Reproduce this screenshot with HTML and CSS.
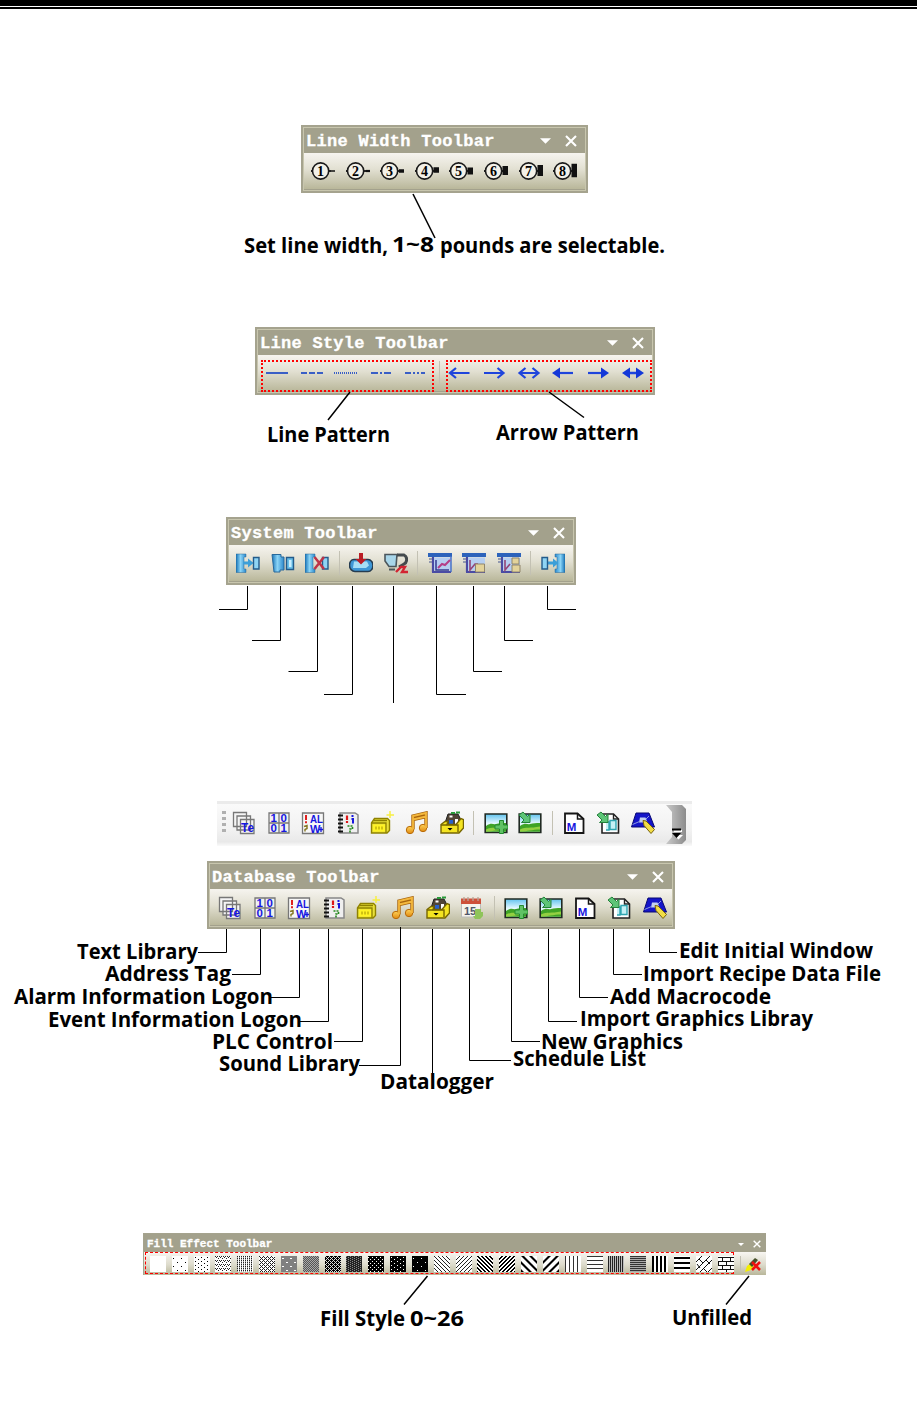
FILE: index.html
```html
<!DOCTYPE html>
<html lang="en">
<head>
<meta charset="utf-8">
<title>Toolbars</title>
<link rel="stylesheet" href="styles.css">
</head>
<body>
<svg class="defs" width="0" height="0">
  <defs>
    <linearGradient id="blue" x1="0" x2="1"><stop offset="0" stop-color="#1673b8"/><stop offset=".45" stop-color="#8bd4f6"/><stop offset="1" stop-color="#2a88cc"/></linearGradient>
    <linearGradient id="sky" x1="0" y1="0" x2="0" y2="1"><stop offset="0" stop-color="#5fc2ee"/><stop offset=".5" stop-color="#e4f8ff"/></linearGradient>
    <linearGradient id="gold" x1="0" y1="0" x2="0" y2="1"><stop offset="0" stop-color="#ffd35a"/><stop offset="1" stop-color="#e08a10"/></linearGradient>
    <linearGradient id="cap"><stop offset="0" stop-color="#c9c9c9"/><stop offset="1" stop-color="#8c8c8c"/></linearGradient>
    <pattern id="p1" width="8" height="8" patternUnits="userSpaceOnUse"><path fill="#fff" d="M0 0h8v8H0z"/><path d="M1 2h1v1H1zM5 6h1v1H5z"/></pattern>
    <pattern id="p2" width="6" height="4" patternUnits="userSpaceOnUse"><path fill="#fff" d="M0 0h6v4H0z"/><path d="M1 1h1v1H1zM4 3h1v1H4z"/></pattern>
    <pattern id="p3" width="4" height="4" patternUnits="userSpaceOnUse"><path fill="#fff" d="M0 0h4v4H0z"/><path fill="#222" d="M0 0h1v1H0zM2 0h1v1H2zM1 1h1v1H1zM3 2h1v1H3z"/></pattern>
    <pattern id="p4" width="2" height="2" patternUnits="userSpaceOnUse"><path fill="#fff" d="M0 0h2v2H0z"/><path fill="#222" d="M0 0h1v1H0z"/><path fill="#aaa" d="M0 1h1v1H0z"/></pattern>
    <pattern id="p5" width="4" height="4" patternUnits="userSpaceOnUse"><path fill="#fff" d="M0 0h4v4H0z"/><path fill="#222" d="M0 0h1v1H0zM1 1h1v1H1zM2 2h1v1H2zM3 3h1v1H3zM3 1h1v1H3zM1 3h1v1H1z"/></pattern>
    <pattern id="p6" width="8" height="8" patternUnits="userSpaceOnUse"><path fill="#808080" d="M0 0h8v8H0z"/><path fill="#fff" d="M1 2h2v1H1zM5 6h2v1H5z"/></pattern>
    <pattern id="p7" width="2" height="2" patternUnits="userSpaceOnUse"><path fill="#aaa" d="M0 0h2v2H0z"/><path fill="#555" d="M0 0h1v1H0zM1 1h1v1H1z"/></pattern>
    <pattern id="p8" width="4" height="4" patternUnits="userSpaceOnUse"><path d="M0 0h4v4H0z"/><path fill="#ddd" d="M0 0h1v1H0zM1 1h1v1H1zM2 2h1v1H2zM3 3h1v1H3zM3 1h1v1H3zM1 3h1v1H1z"/></pattern>
    <pattern id="p9" width="4" height="2" patternUnits="userSpaceOnUse"><path fill="#222" d="M0 0h4v2H0z"/><path fill="#888" d="M0 0h1v1H0zM2 1h1v1H2z"/></pattern>
    <pattern id="p10" width="4" height="4" patternUnits="userSpaceOnUse"><path d="M0 0h4v4H0z"/><path fill="#fff" d="M0 1h1v1H0zM2 3h1v1H2z"/></pattern>
    <pattern id="p11" width="6" height="4" patternUnits="userSpaceOnUse"><path d="M0 0h6v4H0z"/><path fill="#fff" d="M1 1h1v1H1zM4 3h1v1H4z"/></pattern>
    <pattern id="p12" width="8" height="8" patternUnits="userSpaceOnUse"><path d="M0 0h8v8H0z"/><path fill="#fff" d="M1 2h1v1H1zM5 6h1v1H5z"/></pattern>
    <pattern id="p13" width="4" height="4" patternUnits="userSpaceOnUse"><path fill="#fff" d="M0 0h4v4H0z"/><path fill="#222" d="M0 0h1v1H0zM1 1h1v1H1zM2 2h1v1H2zM3 3h1v1H3z"/></pattern>
    <pattern id="p15" width="4" height="4" patternUnits="userSpaceOnUse"><path fill="#fff" d="M0 0h4v4H0z"/><path d="M0 0h2v1H0zM1 1h2v1H1zM2 2h2v1H2zM3 3h1v1H3zM0 3h1v1H0z"/></pattern>
    <pattern id="p17" width="8" height="8" patternUnits="userSpaceOnUse"><path fill="#fff" d="M0 0h8v8H0z"/><path d="M0 0h3l5 5v3zM0 5v3h3z"/></pattern>
    <pattern id="p19" width="4" height="4" patternUnits="userSpaceOnUse"><path fill="#fff" d="M0 0h4v4H0z"/><path fill="#333" d="M0 0h1v4H0z"/></pattern>
    <pattern id="p20" width="4" height="4" patternUnits="userSpaceOnUse"><path fill="#fff" d="M0 0h4v4H0z"/><path fill="#333" d="M0 0h4v1H0z"/></pattern>
    <pattern id="p21" width="2" height="2" patternUnits="userSpaceOnUse"><path fill="#bbb" d="M0 0h2v2H0z"/><path fill="#222" d="M0 0h1v2H0z"/></pattern>
    <pattern id="p22" width="2" height="2" patternUnits="userSpaceOnUse"><path fill="#aaa" d="M0 0h2v2H0z"/><path fill="#333" d="M0 0h2v1H0z"/></pattern>
    <pattern id="p23" width="4" height="4" patternUnits="userSpaceOnUse"><path fill="#fff" d="M0 0h4v4H0z"/><path d="M0 0h2v4H0z"/></pattern>
    <pattern id="p24" width="5" height="5" patternUnits="userSpaceOnUse"><path fill="#fff" d="M0 0h5v5H0z"/><path d="M0 1h5v2H0z"/></pattern>
  </defs>
  <symbol id="down" viewBox="0 0 12 6"><path d="M0 0h12L6 6z" fill="#fff"/></symbol>
  <symbol id="close" viewBox="0 0 12 12"><path d="M1 1l10 10M11 1L1 11" stroke="#fff" stroke-width="2.100"/></symbol>
  <symbol id="ring" viewBox="0 0 24 24"><path d="M17.500 12h2.500M0 12h2" stroke="#222" stroke-width="2"/><circle cx="9.600" cy="12" r="8.100" fill="#f3f1e8" stroke="#1a1a1a" stroke-width="1.600"/></symbol>
  <symbol id="al" viewBox="0 0 24 24"><path d="M2 12h19.500M8 7L2 12l6 5" fill="none" stroke="#1f45dc" stroke-width="2.200"/></symbol>
  <symbol id="ar" viewBox="0 0 24 24"><path d="M2 12h19.500M15.500 7l6 5-6 5" fill="none" stroke="#1f45dc" stroke-width="2.200"/></symbol>
  <symbol id="ab" viewBox="0 0 24 24"><path d="M3 12h18M8.500 7L2.500 12l6 5M15.500 7l6 5-6 5" fill="none" stroke="#1f45dc" stroke-width="2.200"/></symbol>
  <symbol id="fl" viewBox="0 0 24 24"><path d="M7 12h15" stroke="#1f45dc" stroke-width="2.200"/><path d="M1 12l8-5.500v11z" fill="#1438d8"/></symbol>
  <symbol id="fr" viewBox="0 0 24 24"><path d="M2 12h15" stroke="#1f45dc" stroke-width="2.200"/><path d="M23 12l-8-5.500v11z" fill="#1438d8"/></symbol>
  <symbol id="fb" viewBox="0 0 24 24"><path d="M5 12h15" stroke="#1f45dc" stroke-width="2.500"/><path d="M1 12l8-5.500v11zM23 12l-8-5.500v11z" fill="#1438d8"/></symbol>
  <symbol id="bracket" viewBox="0 0 24 24"><path d="M0 3h10v3H8v12h2v3.500H0z" fill="url(#blue)" stroke="#28699b" stroke-width=".5"/></symbol>
  <symbol id="s1" viewBox="0 0 24 24"><use href="#bracket"/><path d="M7 10.500h5V7.500l5.500 4.500-5.500 4.500v-3H7z" fill="#3c9fd8"/><path d="M17.500 6.500h5.500v11.500h-5.500z" fill="#8fd4f4" stroke="#235b8b" stroke-width="1.400"/></symbol>
  <symbol id="s2" viewBox="0 0 24 24"><path d="M1 3.500h9v2.500h3v13H9v2H3z" fill="url(#blue)" stroke="#28699b"/><path d="M15.500 6.500h7v12h-7z" fill="#69bfe9" stroke="#235b8b" stroke-width="1.400"/><path d="M18 9h2.500v7H18z" fill="#c9efff"/></symbol>
  <symbol id="s3" viewBox="0 0 24 24"><use href="#bracket"/><path d="M17.500 6.500h5.500v11.500h-5.500z" fill="#8fd4f4" stroke="#235b8b" stroke-width="1.400"/><path d="M9.500 6l9.500 12M19 6L9.500 18" stroke="#bd3347" stroke-width="2.500"/></symbol>
  <symbol id="s4" viewBox="0 0 24 24"><path d="M5 8.500h14c3 0 5 3 5 6s-2 6-5 6H6c-3 0-5.500-3-5.500-6s1.500-6 4.500-6z" fill="#3f97d6" stroke="#253c50" stroke-width="1.600"/><path d="M5 10.500h13l2 4-3 2.500H4z" fill="#a6def6"/><path d="M10 2h4v6h3.500L12 13.500 6.500 8H10z" fill="#ba1d25"/></symbol>
  <symbol id="s5" viewBox="0 0 24 24"><path d="M1 3.500h12l-1 12H5L1 10z" fill="#a8d6ea" stroke="#4b565c" stroke-width="1.600"/><path d="M13 4h7c4 2 3 8 0 9l-5 3" fill="none" stroke="#454b4e" stroke-width="3"/><path d="M5 18.500h6" stroke="#4b565c" stroke-width="2"/><path d="M12 21l5-5h4l-3 5h6" fill="none" stroke="#d32432" stroke-width="2.400"/></symbol>
  <symbol id="win" viewBox="0 0 24 24"><path d="M0 2h24v4H0z" fill="#2d63bb"/><path d="M5 6v15M4 21h19" stroke="#4a4ba4" stroke-width="2.200"/><path d="M6 6.500h17v13H6z" fill="#b6cff2"/><path d="M1 8h3M1 11h3" stroke="#7883a4" stroke-width="1.500"/></symbol>
  <symbol id="s6" viewBox="0 0 24 24"><use href="#win"/><path d="M23 5v16" stroke="#4972c7" stroke-width="1.500"/><path d="M8 9v10h13" fill="none" stroke="#343b91" stroke-width="1.500"/><path d="M10 17l4-4 3 1 5-5" fill="none" stroke="#b43e88" stroke-width="2"/></symbol>
  <symbol id="s7" viewBox="0 0 24 24"><use href="#win"/><path d="M8 9v10l5-6h3" fill="none" stroke="#944577" stroke-width="1.600"/><path d="M13.500 13h9v8h-9z" fill="#e3d39a" stroke="#91866c"/></symbol>
  <symbol id="s8" viewBox="0 0 24 24"><use href="#win"/><path d="M8 9v10l5-6" fill="none" stroke="#944577" stroke-width="1.600"/><path d="M15 7h7v6h-7zM15 14h8v7h-8z" fill="#e3d39a" stroke="#91866c"/></symbol>
  <symbol id="d1" viewBox="0 0 24 24"><g fill="#f5f5f5" stroke="#777" stroke-width="1.300"><path d="M1.500 1.500h13v14h-13zM5 5h13.500v14H5zM8.500 8.500H22v14H8.500z"/></g><text class="ink" x="9" y="20.500" font-size="13" textLength="13" lengthAdjust="spacingAndGlyphs">Te</text></symbol>
  <symbol id="d2" viewBox="0 0 24 24"><path d="M2 2h20v20H2zM12 2v20M2 12h20" fill="#f1f1f1" stroke="#777" stroke-width="1.300"/><g class="ink" font-size="11.500"><text x="3.600" y="11">1</text><text x="13.600" y="11">0</text><text x="3.600" y="21">0</text><text x="13.600" y="21">1</text></g></symbol>
  <symbol id="d3" viewBox="0 0 24 24"><path d="M1.500 2h21v20.500h-21z" fill="#f7f7f7" stroke="#777" stroke-width="1.300"/><path d="M5 4v5M5 10.200v2" stroke="#e02020" stroke-width="2"/><path d="M3 15.500l3-1v3l-2 1v2" fill="none" stroke="#887b28" stroke-width="1.500"/><g class="ink" font-size="11"><text x="9" y="12" textLength="13" lengthAdjust="spacingAndGlyphs">AL</text><text x="9" y="21.500">W</text></g><path d="M20 16v5M18 18.500h4" stroke="#1616e0" stroke-width="1.300"/></symbol>
  <symbol id="d4" viewBox="0 0 24 24"><path d="M4 2h15l3 2v18H4z" fill="#efefef" stroke="#888" stroke-width="1.500"/><path d="M2 4.500h5M2 8.500h5M2 12.500h5M2 16.500h5M2 20.500h5" stroke="#111" stroke-width="1.800"/><path d="M11 4.500v4.500M11 10v2" stroke="#dd1717" stroke-width="2.200"/><path d="M16.500 4v2M15.500 8h1.500v4.500" fill="none" stroke="#1717dd" stroke-width="2"/><path d="M11.500 15h5v3h-2.500v4" fill="none" stroke="#26891f" stroke-width="1.600" stroke-dasharray="2 1"/></symbol>
  <symbol id="d5" viewBox="0 0 24 24"><path d="M1.500 12l3-4.500h13l2 2v10L17 22H1.500z" fill="#e9e03a" stroke="#8f8200" stroke-width="1.400"/><path d="M2 12h14v10M4 9.500h13" fill="none" stroke="#8f8200" stroke-width="1.300"/><path d="M3 13.500h12v7H3z" fill="#fff325"/><path d="M6 15.500v3M9 15.500v3M12 15.500v3" stroke="#a29200"/><path d="M20 0v7M16.500 4h7.500" stroke="#f7ef42" stroke-width="1.500"/></symbol>
  <symbol id="d6" viewBox="0 0 24 24"><path d="M8 18.500V5L21 2v15M8 8.500L21 5.500" fill="none" stroke="#a8640c" stroke-width="3.400"/><circle cx="5" cy="19" r="3.700" fill="url(#gold)" stroke="#b86a08"/><circle cx="18" cy="17" r="3.700" fill="url(#gold)" stroke="#b86a08"/><path d="M8 18.500V5L21 2v15M8 8.500L21 5.500" fill="none" stroke="#f4b83d" stroke-width="1.800"/></symbol>
  <symbol id="d7" viewBox="0 0 24 24"><path d="M5 12l3-9h10l2 4 2 5-3 4H6z" fill="#514536" stroke="#222"/><path d="M9.500 4.500h3v2h-3zM15 8h3v5h-3z" fill="#fff"/><path d="M9 9h4v5H9z" fill="#2862cd"/><path d="M11 2h4M16 1.500h4" stroke="#299a39" stroke-width="2"/><path d="M1 13.500l4-3h3l-1 3h9l5-6 2.500 1V17L19 22H1z" fill="#f4e422" stroke="#766600" stroke-width="1.400"/><path d="M1 14h17v7" fill="none" stroke="#766600" stroke-width="1.400"/><path d="M7.500 17h5L10 19.500z"/></symbol>
  <symbol id="cal" viewBox="0 0 24 24"><path d="M1.500 4h19v17h-19z" fill="#f5f3ed" stroke="#bbb"/><path d="M1 2.500h20V8H1z" fill="#cd503a"/><path d="M4 1v4M8 1v4M13 1v4M18 1v4" stroke="#b9a697" stroke-width="1.300"/><text x="4" y="18.500" font-family="Liberation Sans" font-weight="bold" font-size="11" fill="#50576a">15</text><path d="M15 13h6v3h2v4l-3 3h-5l-2-3h2z" fill="#8fc45a"/></symbol>
  <symbol id="pic" viewBox="0 0 24 24"><path d="M1.200 3h21.600v18.500H1.200z" fill="url(#sky)" stroke="#202a23" stroke-width="1.600"/><path d="M2 15c6-4 7-1 10-2s6-1 10-1v8.700H2z" fill="#3fa326"/><path d="M2 18.500c6-3 10-1 20-3v3c-8 0-12 2-20 2z" fill="#93cf42"/></symbol>
  <symbol id="g1" viewBox="0 0 24 24"><use href="#pic"/><path d="M15.500 9.500h4V14H24v4h-4.500v4.500h-4V18H11v-4h4.500z" fill="#60c265" stroke="#248b30"/></symbol>
  <symbol id="arr" viewBox="0 0 24 24"><path d="M1 4l5 5-2.500 2.500H12V3L9.500 5.500 5 1z" fill="#5dc477" stroke="#23813a"/></symbol>
  <symbol id="g2" viewBox="0 0 24 24"><use href="#pic"/><use href="#arr"/></symbol>
  <symbol id="g3" viewBox="0 0 24 24"><path d="M3 2.500h12.500L21.500 8v14H3z" fill="#fff" stroke="#151515" stroke-width="1.800"/><path d="M15.500 2.500V8h6" fill="none" stroke="#151515" stroke-width="1.500"/><text class="ink" x="4.800" y="19.500" font-size="11.500">M</text></symbol>
  <symbol id="g4" viewBox="0 0 24 24"><path d="M5 3h11.500l5 5v14H5z" fill="#fff" stroke="#222" stroke-width="1.600"/><path d="M16.500 3v5h5" fill="none" stroke="#222" stroke-width="1.400"/><path d="M9 11h3v8H9M13 9.500h6v9h-6z" fill="#c6f0f5" stroke="#2fa5b1" stroke-width="1.400"/><use href="#arr" x="-1"/></symbol>
  <symbol id="g5" viewBox="0 0 24 24"><path d="M5 2h13l5.500 14H.5z" fill="#1515c9" stroke="#080873"/><path d="M9 6.500h5.500l2 5H8z" fill="#c4d0ee"/><path d="M1.500 13.500l7-3M15 8l3-3" fill="none" stroke="#8d9be0"/><path d="M12 9.500l3 .5 8.500 8.500-3.500 4-7-8z" fill="#f2dd46" stroke="#77620e"/></symbol>
  <symbol id="erase" viewBox="0 0 16 16"><path d="M0 15l2-6 4-3 3 3-3 4z" fill="#f4ee00"/><path d="M4 7l6-6 3 2-6 7z" fill="#46502a"/><path d="M7 5l8 8M15 5l-8 8" stroke="#f01010" stroke-width="2.500"/></symbol>
</svg>

<header class="rule"></header>
<main>
  <section class="toolbar width-bar">
    <div class="title"><h2>Line Width Toolbar</h2><svg class="down"><use href="#down"/></svg><svg class="close"><use href="#close"/></svg></div>
    <div class="tools">
      <svg><use href="#ring"/><path d="M20 12h4" stroke="#111" stroke-width="1.500"/><text class="num" x="9.600" y="16.500">1</text></svg>
      <svg><use href="#ring"/><path d="M20 12h4" stroke="#111" stroke-width="2.200"/><text class="num" x="9.600" y="16.500">2</text></svg>
      <svg><use href="#ring"/><path d="M19 12h5" stroke="#111" stroke-width="3.500"/><text class="num" x="9.600" y="16.500">3</text></svg>
      <svg><use href="#ring"/><path d="M18.500 11h5.500" stroke="#111" stroke-width="5.500"/><text class="num" x="9.600" y="16.500">4</text></svg>
      <svg><use href="#ring"/><path d="M18.500 12h5.500" stroke="#111" stroke-width="7"/><text class="num" x="9.600" y="16.500">5</text></svg>
      <svg><use href="#ring"/><path d="M18.500 11.500h5.500" stroke="#111" stroke-width="9"/><text class="num" x="9.600" y="16.500">6</text></svg>
      <svg><use href="#ring"/><path d="M18.500 11.500h5.500" stroke="#111" stroke-width="11"/><text class="num" x="9.600" y="16.500">7</text></svg>
      <svg><use href="#ring"/><path d="M18.500 11.500h5.500" stroke="#111" stroke-width="13.500"/><text class="num" x="9.600" y="16.500">8</text></svg>
    </div>
  </section>
  <svg class="callouts" width="917" height="134" viewBox="0 193 917 134">
    <path d="M413 194l22 44" class="slant"/>
    <text x="244" y="253" textLength="144" lengthAdjust="spacingAndGlyphs">Set line width,</text><text x="392" y="252" textLength="42" lengthAdjust="spacingAndGlyphs">1~8</text><text x="440" y="253" textLength="225" lengthAdjust="spacingAndGlyphs">pounds are selectable.</text>
  </svg>

  <section class="toolbar style-bar">
    <div class="title"><h2>Line Style Toolbar</h2><svg class="down"><use href="#down"/></svg><svg class="close"><use href="#close"/></svg></div>
    <div class="tools grouped">
      <div class="group lines">
        <svg><path class="ln" d="M1 12h22"/></svg>
        <svg><path class="ln" stroke-dasharray="6 2" d="M1 12h22"/></svg>
        <svg><path class="ln" stroke-dasharray="1 1" d="M0 12h24"/></svg>
        <svg><path class="ln" stroke-dasharray="7 2 2 2" d="M2 12h20"/></svg>
        <svg><path class="ln" stroke-dasharray="6 2 2 2 2 2" d="M2 12h20"/></svg>
      </div>
      <i class="sep"></i>
      <div class="group arrows">
        <svg><use href="#al"/></svg><svg><use href="#ar"/></svg><svg><use href="#ab"/></svg><svg><use href="#fl"/></svg><svg><use href="#fr"/></svg><svg><use href="#fb"/></svg>
      </div>
    </div>
  </section>
  <svg class="callouts" width="917" height="122" viewBox="0 395 917 122">
    <path d="M350 392l-22 28M549 392l35 25.500" class="slant"/>
    <text x="267" y="442" textLength="123" lengthAdjust="spacingAndGlyphs">Line Pattern</text><text x="496" y="440" textLength="143" lengthAdjust="spacingAndGlyphs">Arrow Pattern</text>
  </svg>

  <section class="toolbar system-bar">
    <div class="title"><h2>System Toolbar</h2><svg class="down"><use href="#down"/></svg><svg class="close"><use href="#close"/></svg></div>
    <div class="tools">
      <svg><use href="#s1"/></svg><svg><use href="#s2"/></svg><svg><use href="#s3"/></svg><i class="sep"></i>
      <svg><use href="#s4"/></svg><svg><use href="#s5"/></svg><i class="sep"></i>
      <svg><use href="#s6"/></svg><svg><use href="#s7"/></svg><svg><use href="#s8"/></svg><i class="sep"></i>
      <svg><g transform="matrix(-1 0 0 1 24 0)"><use href="#bracket"/><path d="M17 10.500h-5V7.500L6.500 12l5.500 4.500v-3h5z" fill="#3c9fd8"/><path d="M17.500 6.500h5.500v11.500h-5.500z" fill="#8fd4f4" stroke="#235b8b" stroke-width="1.400"/></g></svg>
    </div>
  </section>
  <svg class="callouts" width="917" height="216" viewBox="0 585 917 216">
    <path class="lead" d="M247.500 586v23.500H219M280.500 586v54.500H252M317.500 586v85.500H288.500M352.500 586v108.500H324M393.500 586v117M436.500 586v108.500H466M473.500 586v85.500H502M504.500 586v54.500H533M547.500 586v23.500H576"/>
  </svg>

  <section class="lightbar">
    <span class="grip"></span>
    <div class="tools">
      <svg><use href="#d1"/></svg><svg><use href="#d2"/></svg><svg><use href="#d3"/></svg><svg><use href="#d4"/></svg><svg><use href="#d5"/></svg><svg><use href="#d6"/></svg><svg><use href="#d7"/></svg><i class="sep"></i>
      <svg><use href="#g1"/></svg><svg><use href="#g2"/></svg><i class="sep"></i>
      <svg><use href="#g3"/></svg><svg><use href="#g4"/></svg><svg><use href="#g5"/></svg>
    </div>
    <svg class="more" width="20" height="39" viewBox="0 0 20 39"><path d="M0 0h16l4 4v31l-4 4H0l6-7V7z" fill="url(#cap)"/><path d="M7 24h8v2H7zM7 29h9l-4.500 4.500z" fill="#fff" transform="translate(1 1)"/><path d="M6 23.500h9v2H6zM6 28h9l-4.500 5z"/></svg>
  </section>

  <section class="toolbar data-bar">
    <div class="title"><h2>Database Toolbar</h2><svg class="down"><use href="#down"/></svg><svg class="close"><use href="#close"/></svg></div>
    <div class="tools">
      <svg><use href="#d1"/></svg><svg><use href="#d2"/></svg><svg><use href="#d3"/></svg><svg><use href="#d4"/></svg><svg><use href="#d5"/></svg><svg><use href="#d6"/></svg><svg><use href="#d7"/></svg><svg><use href="#cal"/></svg><i class="sep"></i>
      <svg><use href="#g1"/></svg><svg><use href="#g2"/></svg><svg><use href="#g3"/></svg><svg><use href="#g4"/></svg><svg><use href="#g5"/></svg>
    </div>
  </section>
  <svg class="callouts" width="917" height="304" viewBox="0 929 917 304">
    <path class="lead" d="M226.500 929v23.500H198M260.500 929v45.500H232M299.500 929v68.500H271M328.500 929v92.500H300M362.500 929v112.500H334M400.500 927v138.500H359M432.500 929v147M469.500 929v131.500H511M511.500 929v112.500H540M548.500 929v92.500H577M579.500 929v68.500H608M613.500 929v45.500H642M649.500 929v23.500H677"/>
    <text x="77" y="959" textLength="121" lengthAdjust="spacingAndGlyphs">Text Library</text>
    <text x="105" y="981" textLength="126" lengthAdjust="spacingAndGlyphs">Address Tag</text>
    <text x="14" y="1004" textLength="259" lengthAdjust="spacingAndGlyphs">Alarm Information Logon</text>
    <text x="48" y="1027" textLength="254" lengthAdjust="spacingAndGlyphs">Event Information Logon</text>
    <text x="212" y="1049" textLength="121" lengthAdjust="spacingAndGlyphs">PLC Control</text>
    <text x="219" y="1071" textLength="141" lengthAdjust="spacingAndGlyphs">Sound Library</text>
    <text x="380" y="1089" textLength="114" lengthAdjust="spacingAndGlyphs">Datalogger</text>
    <text x="679" y="958" textLength="194" lengthAdjust="spacingAndGlyphs">Edit Initial Window</text>
    <text x="643" y="981" textLength="238" lengthAdjust="spacingAndGlyphs">Import Recipe Data File</text>
    <text x="610" y="1004" textLength="161" lengthAdjust="spacingAndGlyphs">Add Macrocode</text>
    <text x="580" y="1025.500" textLength="233" lengthAdjust="spacingAndGlyphs">Import Graphics Libray</text>
    <text x="541" y="1048.500" textLength="142" lengthAdjust="spacingAndGlyphs">New Graphics</text>
    <text x="513" y="1066" textLength="133" lengthAdjust="spacingAndGlyphs">Schedule List</text>
  </svg>

  <section class="toolbar fill-bar">
    <div class="title"><h2>Fill Effect Toolbar</h2><svg class="down"><use href="#down"/></svg><svg class="close"><use href="#close"/></svg></div>
    <div class="fills">
      <div class="swatches">
        <svg><rect fill="#fff"/></svg><svg><rect fill="url(#p1)"/></svg><svg><rect fill="url(#p2)"/></svg><svg><rect fill="url(#p3)"/></svg><svg><rect fill="url(#p4)"/></svg><svg><rect fill="url(#p5)"/></svg><svg><rect fill="url(#p6)"/></svg><svg><rect fill="url(#p7)"/></svg><svg><rect fill="url(#p8)"/></svg><svg><rect fill="url(#p9)"/></svg><svg><rect fill="url(#p10)"/></svg><svg><rect fill="url(#p11)"/></svg><svg><rect fill="url(#p12)"/></svg><svg><rect fill="url(#p13)"/></svg><svg class="flip"><rect fill="url(#p13)"/></svg><svg><rect fill="url(#p15)"/></svg><svg class="flip"><rect fill="url(#p15)"/></svg><svg><rect fill="url(#p17)"/></svg><svg class="flip"><rect fill="url(#p17)"/></svg><svg><rect fill="url(#p19)"/></svg><svg><rect fill="url(#p20)"/></svg><svg><rect fill="url(#p21)"/></svg><svg><rect fill="url(#p22)"/></svg><svg><rect fill="url(#p23)"/></svg><svg><rect fill="url(#p24)"/></svg>
        <svg><rect fill="#fff"/><path d="M0 6l6-6M0 14L14 0M4 16L16 4M12 16l4-4M3 3l4 4M10 4l4 4M7 12l4 4M1 8l3 4" fill="none" stroke="#111"/></svg>
        <svg><rect fill="#fff"/><path d="M0 1.500h16M0 5.500h16M0 9.500h16M0 13.500h16M4.500 1v4M12.500 1v4M.5 5v4M8.500 5v4M4.500 9v4M12.500 9v4M8.500 13v3" stroke="#111"/></svg>
      </div>
      <i class="sep"></i>
      <svg class="erase"><use href="#erase"/></svg>
    </div>
  </section>
  <svg class="callouts" width="917" height="129" viewBox="0 1275 917 129">
    <path d="M427.500 1276L404 1304.500M749 1276l-23 28.500" class="slant"/>
    <text x="320" y="1326" textLength="85" lengthAdjust="spacingAndGlyphs">Fill Style</text><text x="410" y="1326" textLength="54" lengthAdjust="spacingAndGlyphs">0~26</text><text x="672" y="1325" textLength="80" lengthAdjust="spacingAndGlyphs">Unfilled</text>
  </svg>
</main>
</body>
</html>
```
FILE: styles.css
```css
body {
  margin: 0;
  background: #fff;
  overflow: hidden;
}
svg { display: block; }
.defs { position: absolute; }
.rule {
  height: 1px;
  border-top: 6px solid #000;
  border-bottom: 2px solid #000;
}
main { padding-top: 116px; }

.toolbar {
  box-sizing: border-box;
  height: 68px;
  border: 2px solid #a5a38e;
  outline: 1px solid #c8c6ae;
  outline-offset: -3px;
  background: #a3a18c;
}
.title {
  display: flex;
  align-items: center;
  height: 26px;
  padding: 0 9px 0 3px;
}
.title h2 {
  flex: 1;
  margin: 3px 0 0;
  font: bold 17px/22px "Liberation Mono", monospace;
  letter-spacing: .28px;
  color: #fff;
  -webkit-text-stroke: .3px #fff;
  white-space: nowrap;
}
.title .down { width: 11px; height: 6px; margin: 2px 14px 0 0; }
.title .close { width: 12px; height: 12px; margin-top: 2px; }
.tools {
  display: flex;
  align-items: center;
  gap: 10.6px;
}
.tools svg { flex: none; width: 24px; height: 24px; }
.toolbar .tools {
  box-sizing: border-box;
  height: 36px;
  margin: 0 1px;
  padding-left: 7px;
  background: linear-gradient(#f6f4ef, #e2e0d2 45%, #b9b79a);
}
.sep {
  flex: none;
  width: 1px;
  height: 24px;
  margin: 0 -1.1px;
  background: #c3c1b3;
}
.num {
  font: bold 14px "Liberation Serif", serif;
  text-anchor: middle;
}
.ink {
  font-family: "Liberation Sans", sans-serif;
  font-weight: bold;
  fill: #1616e0;
}
.width-bar { width: 287px; margin-left: 301px; }
.style-bar { width: 400px; margin-left: 255px; }
.system-bar { width: 350px; margin-left: 226px; }
.data-bar { width: 468px; margin: 15px 0 0 207px; }
.data-bar .tools { padding-left: 8px; padding-top: 2px; }

.toolbar .grouped { gap: 0; padding-left: 3px; }
.group {
  display: flex;
  align-items: center;
  gap: 10.6px;
  box-sizing: border-box;
  height: 32px;
  margin-top: 5px;
  padding-bottom: 5px;
  border: 2px dotted #f00;
}
.lines { width: 173px; padding-left: 2px; }
.arrows { width: 207px; }
.grouped .sep { margin: 0 6px 0 5px; }
.ln { stroke: #3a5fc6; stroke-width: 2; }

.callouts { overflow: visible; position: relative; }
.callouts text {
  font: bold 21px "Open Sans", "Noto Sans", sans-serif;
}
.slant { fill: none; stroke: #000; stroke-width: 1.5; }
.lead { fill: none; stroke: #000; stroke-width: 1; }

.lightbar {
  display: flex;
  align-items: center;
  box-sizing: border-box;
  width: 475px;
  height: 45px;
  margin-left: 217px;
  padding: 0 0 4px 5px;
  border-top: 3px solid #ebebeb;
  background: linear-gradient(#fafafa, #f2f2f2 60%, #e9e9e9 90%, #fafafa);
}
.lightbar .tools { margin-left: 6px; }
.lightbar .more { margin: 3px 0 0 11px; }
.grip {
  width: 4px;
  height: 24px;
  background: repeating-linear-gradient(#b0b0b0 0 3px, transparent 3px 6px);
}

.fill-bar {
  width: 623px;
  height: 42px;
  margin-left: 143px;
  border-width: 1px 0 0 1px;
  outline: none;
}
.fill-bar .title { height: 18px; padding: 0 5px 0 3px; box-sizing: border-box; }
.fill-bar h2 { margin: 1px 0 0; font-size: 11px; line-height: 14px; letter-spacing: 0; }
.fill-bar .down { width: 6px; height: 3px; margin: 2px 9px 0 0; }
.fill-bar .close { width: 8px; height: 8px; margin-top: 2px; }
.fills {
  display: flex;
  align-items: flex-start;
  height: 23px;
  padding-left: 1px;
  background: linear-gradient(#f8f6f2, #dddbcc 55%, #b9b79a);
}
.swatches {
  display: flex;
  align-items: center;
  gap: 5.83px;
  box-sizing: border-box;
  width: 589px;
  height: 22px;
  padding: 2px 0 0 4px;
  border: 1px dashed #f00;
}
.swatches svg { flex: none; width: 16px; height: 16px; }
.swatches rect { width: 16px; height: 16px; }
.flip { transform: scaleX(-1); }
.fills .sep { height: 15px; margin: 4px 4px 0 6px; }
.erase { width: 16px; height: 16px; margin-top: 5px; }
```
